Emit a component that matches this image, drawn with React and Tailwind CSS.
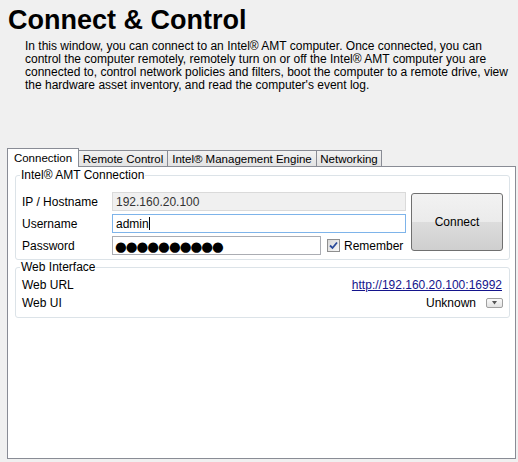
import React from "react";

const tabs = [
  { label: "Connection", w: "w-[72px]", active: true },
  { label: "Remote Control", w: "w-[90px]" },
  { label: "Intel® Management Engine", w: "w-[150px]" },
  { label: "Networking", w: "w-[66px]" },
];

function Tab({ label, w, active }) {
  if (active) {
    return (
      <div className={`${w} h-[19px] -mb-px relative z-10 bg-white border border-b-0 border-[#898c95] flex items-start justify-center pt-[2px] text-[11.5px] leading-[14px]`}>
        {label}
      </div>
    );
  }
  return (
    <div className={`${w} h-[16px] -ml-px first:ml-0 bg-gradient-to-b from-[#f2f2f2] to-[#e3e3e3] border border-b-0 border-[#898c95] flex items-center justify-center text-[11.5px] leading-[14px]`}>
      {label}
    </div>
  );
}

function Group({ title, children, className = "" }) {
  return (
    <fieldset className={`border border-[#dce3e8] rounded-[3px] px-[6px] ${className}`}>
      <legend className="px-[1px] -ml-[2px] text-[12px] leading-[14px]">{title}</legend>
      {children}
    </fieldset>
  );
}

function CheckBox() {
  return (
    <div className="w-[13px] h-[13px] border border-[#8f8f8f] bg-gradient-to-br from-[#d8d8d8] to-[#f8f8f8] flex items-center justify-center">
      <svg width="9" height="9" viewBox="0 0 9 9">
        <path d="M1 4.5 L3.5 7 L8 1.5" fill="none" stroke="#2a4a9a" strokeWidth="1.8" />
      </svg>
    </div>
  );
}

export default function App() {
  return (
    <div className="w-[518px] h-[462px] bg-[#f0f0f0] overflow-hidden flex flex-col text-black font-['Liberation_Sans',Arial,sans-serif]">
      <h1 className="pl-[8px] pt-[6px] text-[27px] leading-[28px] font-bold">Connect &amp; Control</h1>
      <p className="mt-[6px] pl-[25px] text-[12px] leading-[13px] whitespace-nowrap">
        In this window, you can connect to an Intel® AMT computer. Once connected, you can
        <br />
        control the computer remotely, remotely turn on or off the Intel® AMT computer you are
        <br />
        connected to, control network policies and filters, boot the computer to a remote drive, view
        <br />
        the hardware asset inventory, and read the computer's event log.
      </p>

      <div className="mt-[56px] h-[18px] pl-[7px] flex items-end">
        {tabs.map((t) => (
          <Tab key={t.label} {...t} />
        ))}
      </div>

      <div className="ml-[7px] w-[509px] h-[293px] bg-white border border-[#898c95] pl-[7px] pr-[5px] pt-px flex flex-col">
        <Group title="Intel® AMT Connection" className="pb-[4px]">
          <div className="mt-[10px] flex text-[12px] leading-[14px]">
            <div className="flex-1 flex flex-col gap-[3px]">
              <div className="flex items-center h-[19px]">
                <div className="w-[90px]">IP / Hostname</div>
                <div className="flex-1 h-[19px] bg-[#f0f0f0] border border-[#dadada] flex items-center pl-[3px] text-[#333]">
                  192.160.20.100
                </div>
              </div>
              <div className="flex items-center h-[19px]">
                <div className="w-[90px]">Username</div>
                <div className="flex-1 h-[19px] bg-white border border-[#7eb4ea] flex items-center pl-[3px]">
                  admin<span className="w-px h-[13px] bg-black" />
                </div>
              </div>
              <div className="flex items-center h-[19px]">
                <div className="w-[90px]">Password</div>
                <div className="w-[209px] h-[19px] bg-white border border-[#abadb3] flex items-center pl-[2px] font-['DejaVu_Sans',sans-serif] text-[13.5px] leading-[14px] tracking-[-1px]">
                  ●●●●●●●●●●
                </div>
                <div className="ml-[6px]">
                  <CheckBox />
                </div>
                <span className="ml-[4px]">Remember</span>
              </div>
            </div>
            <button className="ml-[5px] mt-px w-[92px] h-[58px] rounded-[3px] border border-[#707070] bg-[linear-gradient(#f2f2f2_0%,#ebebeb_50%,#dddddd_50%,#cfcfcf_100%)] text-[12px]">
              Connect
            </button>
          </div>
        </Group>

        <Group title="Web Interface" className="pb-[5px]">
          <div className="mt-[2px] text-[12px] leading-[14px]">
            <div className="h-[18px] flex items-center justify-between">
              <span>Web URL</span>
              <span className="text-[#14148c] underline mr-px">http://192.160.20.100:16992</span>
            </div>
            <div className="h-[18px] flex items-center justify-between">
              <span>Web UI</span>
              <div className="flex items-center">
                <span>Unknown</span>
                <div className="ml-[10px] w-[17px] h-[10px] rounded-[2px] border border-[#a0a0a0] bg-gradient-to-b from-[#fafafa] to-[#e2e2e2] flex items-center justify-center">
                  <svg width="5" height="4" viewBox="0 0 5 4">
                    <path d="M0 0 H5 L2.5 3.5 Z" fill="#555" />
                  </svg>
                </div>
              </div>
            </div>
          </div>
        </Group>
      </div>
    </div>
  );
}
